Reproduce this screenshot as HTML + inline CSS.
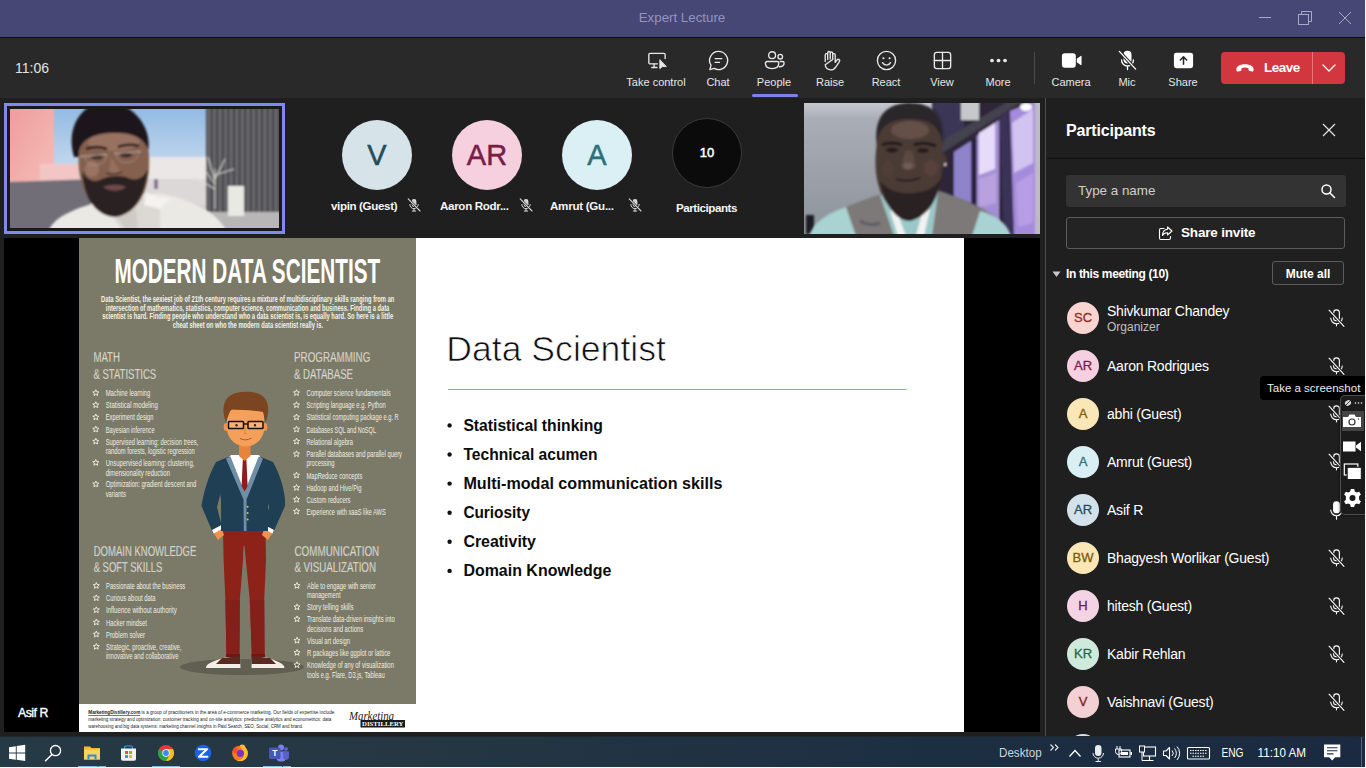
<!DOCTYPE html>
<html lang="en">
<head>
<meta charset="utf-8">
<title>Expert Lecture</title>
<style>
*{box-sizing:border-box;margin:0;padding:0}
html,body{width:1366px;height:768px;overflow:hidden;background:#1f1f1f;font-family:"Liberation Sans",sans-serif;color:#fff}
#app{position:relative;width:1366px;height:768px;overflow:hidden;background:#1f1f1f}
.abs{position:absolute}
/* title bar */
#titlebar{position:absolute;left:0;top:0;width:1366px;height:38px;background:#464775;border-bottom:1px solid #0c0c16;z-index:2}
#titlebar .t{position:absolute;left:0;width:1364px;top:10px;text-align:center;font-size:13.3px;color:#9494c0}
/* toolbar */
#toolbar{position:absolute;left:0;top:37px;width:1366px;height:61px;background:#292929}
#time{position:absolute;left:15px;top:23px;font-size:14px;color:#e3e3e3}
.tb{position:absolute;top:0;height:61px;width:70px;text-align:center}
.tb .lb{position:absolute;left:-20px;right:-20px;top:39px;font-size:11px;color:#e6e6e6;text-align:center;white-space:nowrap}
.tb svg{position:absolute;left:50%;top:11.7px;margin-left:-11.5px;width:23px;height:23px}
#leave{position:absolute;left:1221px;top:15px;width:124px;height:32px;background:#d2363f;border-radius:4px}
#leave .dv{position:absolute;left:91px;top:0;width:1px;height:32px;background:#e8747a}
#leave .tx{position:absolute;left:43px;top:8px;font-size:13.5px;font-weight:bold;color:#fff;letter-spacing:-0.5px}
/* stage */
#stage{position:absolute;left:0;top:98px;width:1046px;height:638px;background:#1f1f1f}
.av{position:absolute;width:70px;height:70px;border-radius:50%;text-align:center;line-height:70px;font-size:29px;-webkit-text-stroke:0.5px currentColor}
.avl{position:absolute;font-size:11.6px;color:#f4f4f4;white-space:nowrap;font-weight:bold;line-height:14px}
/* panel */
#panel{position:absolute;left:1047px;top:98px;width:319px;height:638px;background:#1f1f1f}
#pborder{position:absolute;left:1045px;top:98px;width:1px;height:638px;background:#4d4d4d}
.row{position:absolute;left:0;width:320px;height:48px}
.row .pa{position:absolute;left:20px;top:8px;width:32px;height:32px;border-radius:50%;font-size:13px;line-height:32px;text-align:center;-webkit-text-stroke:0.3px currentColor}
.row .nm{position:absolute;left:60px;top:16px;font-size:14px;color:#fff;white-space:nowrap;letter-spacing:-0.22px}
.row svg{position:absolute;left:277.5px;top:12.9px;width:23px;height:23px}
/* taskbar */
#taskbar{position:absolute;left:0;top:736px;width:1366px;height:32px;background:linear-gradient(90deg,#263a45 0%,#243743 30%,#1c2e42 70%,#1b2a41 100%);border-bottom:1px solid #f4f4f4;border-top:1px solid #20272d}
</style>
</head>
<body>
<div id="app">
<div id="titlebar"><div class="t">Expert Lecture</div><svg class="abs" style="left:1251px;top:6px" width="110" height="26" viewBox="0 0 110 26" fill="none" stroke="#a9a9c9" stroke-width="1">
<path d="M8 11.5H20"/>
<rect x="47.5" y="8.5" width="10" height="10"/><path d="M50.5 8.5V5.5H60.5V15.5H57.5"/>
<path d="M88 6L100 18M100 6L88 18"/>
</svg></div>
<div id="toolbar"><div id="time">11:06</div>
<div class="tb" style="left:621px"><svg viewBox="0 0 24 24" fill="none" stroke="#e8e8e8" stroke-width="1.4" stroke-linecap="round" stroke-linejoin="round"><path d="M13 15.5H5.2A1.2 1.2 0 0 1 4 14.3V5.700000000000001A1.2 1.2 0 0 1 5.2 4.5H19.8A1.2 1.2 0 0 1 21 5.7V10"/><path d="M9.500000000000002 15.5V19M7 19.3H12.500000000000002"/><path d="M15.5 11.5V20.5L18 18.300000000000002H21.8Z" fill="#e8e8e8" stroke-width="1"/></svg><div class="lb">Take control</div></div>
<div class="tb" style="left:683px"><svg viewBox="0 0 24 24" fill="none" stroke="#e8e8e8" stroke-width="1.4" stroke-linecap="round" stroke-linejoin="round"><path d="M12 2.5a9.5 9.5 0 1 1-4.600000000000001 17.8L3 21.5l1.2-4.4A9.5 9.5 0 0 1 12 2.5Z"/><path d="M8.5 10H15.5M8.5 14H13"/></svg><div class="lb">Chat</div></div>
<div class="tb" style="left:739px"><svg viewBox="0 0 24 24" fill="none" stroke="#e8e8e8" stroke-width="1.4" stroke-linecap="round" stroke-linejoin="round"><circle cx="9.5" cy="6.500000000000001" r="3.6"/><circle cx="18" cy="8" r="2.4"/><path d="M4.2 13H14.8A1.7 1.7 0 0 1 16.5 14.7C16.5 18 14 20.5 9.500000000000002 20.5S2.5 18 2.5 14.7A1.7 1.7 0 0 1 4.2 13Z"/><path d="M17 18.500000000000004C20.000000000000004 18.500000000000004 22 16.8 22 14.6A1.6 1.6 0 0 0 20.400000000000002 13H18.000000000000004"/></svg><div class="lb">People</div><div class="abs" style="left:13px;top:57px;width:46px;height:3px;border-radius:2px;background:#7b83eb"></div></div>
<div class="tb" style="left:795px"><svg viewBox="0 0 24 24" fill="none" stroke="#e8e8e8" stroke-width="1.4" stroke-linecap="round" stroke-linejoin="round"><path d="M6.5 13V6.2a1.3 1.3 0 0 1 2.6 0V11M9.1 10.5V3.9a1.3 1.3 0 0 1 2.6 0V10.500000000000002M11.700000000000001 10.5V4.4a1.3 1.3 0 0 1 2.6 0V11M14.3 11V6.2a1.3 1.3 0 0 1 2.6 0V14l2-2.600000000000001a1.5 1.5 0 0 1 2.4 1.8000000000000003l-3.7 5.4C16.4 20.6 14.600000000000001 21.8 12 21.8S6.5 19.900000000000002 6.500000000000001 16.5Z"/></svg><div class="lb">Raise</div></div>
<div class="tb" style="left:851px"><svg viewBox="0 0 24 24" fill="none" stroke="#e8e8e8" stroke-width="1.4" stroke-linecap="round" stroke-linejoin="round"><circle cx="12" cy="12" r="9.5"/><path d="M7.8 14.2c1 1.7 2.4 2.6 4.2 2.6s3.2-0.9 4.2-2.6"/><circle cx="8.8" cy="9.600000000000001" r="1.1" fill="#e8e8e8" stroke="none"/><circle cx="15.2" cy="9.600000000000001" r="1.1" fill="#e8e8e8" stroke="none"/></svg><div class="lb">React</div></div>
<div class="tb" style="left:907px"><svg viewBox="0 0 24 24" fill="none" stroke="#e8e8e8" stroke-width="1.4" stroke-linecap="round" stroke-linejoin="round"><rect x="3.5" y="3.5" width="17" height="17" rx="2.5"/><path d="M12 3.5V20.5M3.5 12H20.5"/></svg><div class="lb">View</div></div>
<div class="tb" style="left:963px"><svg viewBox="0 0 24 24" fill="#e8e8e8"><circle cx="5.2" cy="12" r="1.95"/><circle cx="12" cy="12" r="1.95"/><circle cx="18.8" cy="12" r="1.95"/></svg><div class="lb">More</div></div>
<div class="abs" style="left:1034px;top:15px;width:1px;height:32px;background:#4a4a4a"></div>
<div class="tb" style="left:1036px"><svg viewBox="0 0 24 24" fill="#ffffff"><rect x="2" y="4.5" width="14.5" height="15" rx="3"/><path d="M17.5 10.2L21.6 7.2A0.6 0.6 0 0 1 22.5 7.7V16.3A0.6 0.6 0 0 1 21.6 16.8L17.500000000000004 13.8Z"/></svg><div class="lb">Camera</div></div>
<div class="tb" style="left:1092px"><svg viewBox="0 0 24 24" fill="none" stroke="#ffffff" stroke-width="1.4" stroke-linecap="round"><rect x="8.5" y="2.5" width="7" height="12" rx="3.5" fill="#ffffff"/><path d="M5.800000000000001 11.5a6.2 6.2 0 0 0 12.4 0M12 17.8V21.5"/><path d="M3.5 2.5L20.5 21" stroke="#292929" stroke-width="3.4"/><path d="M3.5 2.5L20.5 21"/></svg><div class="lb">Mic</div></div>
<div class="tb" style="left:1148px"><svg viewBox="0 0 24 24"><rect x="2" y="4" width="20" height="16" rx="2.600000000000001" fill="#ffffff"/><path d="M12 16V8.500000000000002M8.700000000000001 11.5L12 8.2L15.3 11.5" fill="none" stroke="#292929" stroke-width="1.6" stroke-linecap="round" stroke-linejoin="round"/></svg><div class="lb">Share</div></div>
<div id="leave"><svg class="abs" style="left:14px;top:8px" width="20" height="16" viewBox="0 0 20 16"><path d="M1.4 9.600000000000001C1 6.5 5 4.3 10 4.3S19 6.5 18.6 9.6L18.400000000000002 10.7A1 1 0 0 1 17.200000000000003 11.5L14.4 10.9A1 1 0 0 1 13.6 10L13.4 8.3A9 9 0 0 0 6.6000000000000005 8.3L6.4 10A1 1 0 0 1 5.6000000000000005 10.9L2.8 11.5A1 1 0 0 1 1.6 10.7Z" fill="#fff"/></svg><div class="tx">Leave</div><div class="dv"></div><svg class="abs" style="left:100px;top:10px" width="16" height="12" viewBox="0 0 16 12" fill="none" stroke="#fff" stroke-width="1.3" stroke-linecap="round" stroke-linejoin="round"><path d="M2 3L8 9L14 3"/></svg></div>
</div>
<div id="stage">
<div class="abs" style="left:4px;top:5px;width:281px;height:131px;border:3px solid #8189ee;background:#1a1a1a"></div>
<svg class="abs" style="left:10px;top:11px" width="269" height="119" viewBox="0 0 269 119">
<defs>
<linearGradient id="v1sky" x1="0" y1="0" x2="0" y2="1"><stop offset="0" stop-color="#93bbe4"/><stop offset="0.55" stop-color="#c9dcee"/><stop offset="1" stop-color="#efeaea"/></linearGradient>
<linearGradient id="v1pink" x1="0" y1="0" x2="1" y2="1"><stop offset="0" stop-color="#ee9c9c"/><stop offset="1" stop-color="#f6bdb8"/></linearGradient>
<linearGradient id="v1cur" x1="0" y1="0" x2="1" y2="0"><stop offset="0" stop-color="#3e3e42"/><stop offset="0.5" stop-color="#77777b"/><stop offset="1" stop-color="#3e3e42"/></linearGradient>
<pattern id="v1st" width="5.6" height="10" patternUnits="userSpaceOnUse"><rect width="5.600" height="10" fill="url(#v1cur)"/></pattern>
<filter id="v1b" x="-5%" y="-5%" width="110%" height="110%"><feGaussianBlur stdDeviation="0.9"/></filter>
<filter id="v1b2" x="-10%" y="-10%" width="120%" height="120%"><feGaussianBlur stdDeviation="2.2"/></filter>
<clipPath id="v1c"><rect width="269" height="119"/></clipPath>
</defs>
<g clip-path="url(#v1c)">
<rect width="269" height="119" fill="url(#v1sky)"/>
<g filter="url(#v1b)">
<rect x="120" y="48" width="80" height="50" fill="#ece7e7"/>
<rect x="120" y="70" width="80" height="28" fill="#dcd8d8"/>
<rect x="0" y="96" width="269" height="23" fill="#d5d1d2"/>
<rect x="-2" y="-2" width="46" height="76" fill="url(#v1pink)"/>
<rect x="30" y="55" width="40" height="18" fill="#f3c6c6"/>
<path d="M-2 73L83 70V121H-2Z" fill="#716e77"/>
<rect x="196" y="-2" width="75" height="105" fill="url(#v1st)"/>
<rect x="196" y="103" width="75" height="18" fill="#b9b6b8"/>
<rect x="218" y="77" width="16" height="30" fill="#e9e9e4"/>
<path d="M205 100V60M205 75L190 55M205 70L215 50M205 80L184 68M205 66L224 60M205 72L198 48" stroke="#e4e0da" stroke-width="1.100" fill="none" opacity="0.85"/>
<rect x="144" y="70" width="4" height="10" fill="#8a6f8f"/>
</g>
<g filter="url(#v1b)">
<path d="M39 121C45 106 70 98 92 92L150 84C175 90 205 100 216 121Z" fill="#ebe9e4"/>
<path d="M92 92L112 121H150L150 86Z" fill="#dcd9d3"/>
<path d="M136 84L160 90L150 100L134 96Z" fill="#f4f3ef"/>
<path d="M104 104L116 121H128L126 100Z" fill="#cfcbc4"/>
<path d="M64 48C57 24 66 6 80 -3L114 -3C132 6 143 26 137 48Z" fill="#1b191b"/>
<path d="M69 42C66 70 76 100 105 107C128 105 141 82 139 45C136 28 122 23 102 24C84 25 72 30 69 42Z" fill="#85604f"/>
<ellipse cx="104" cy="33" rx="26" ry="9" fill="#9c7665" opacity="0.8"/>
<ellipse cx="82" cy="60" rx="7" ry="8" fill="#a07868" opacity="0.8"/>
<path d="M76 40Q86 36 97 40" stroke="#241a18" stroke-width="2.600" fill="none"/>
<path d="M108 38Q118 34 129 37" stroke="#241a18" stroke-width="2.600" fill="none"/>
<ellipse cx="87" cy="48" rx="6" ry="2.600" fill="#3a2a26"/><ellipse cx="116" cy="46" rx="6" ry="2.600" fill="#3a2a26"/>
<path d="M101 48L99 62Q104 66 110 62Z" fill="#96705f"/>
<path d="M96 64Q104 67 112 63" stroke="#4a342e" stroke-width="1.600" fill="none"/>
<path d="M72 62C74 92 88 108 106 108C124 105 135 88 138 60C132 72 124 72 116 68C108 66 98 67 92 70C84 74 78 72 72 62Z" fill="#2a2124"/>
<path d="M93 78C100 75 110 75 116 78C110 83 100 83 93 78Z" fill="#70494a"/>
<path d="M70 47.500L97 45.500M104 44.700L131 42.500" stroke="#cfc7c0" stroke-width="0.9" opacity="0.85"/>
<path d="M75 47.500Q76 56 86 56Q96 55 97 46M106 45Q107 54 117 53.500Q127 53 129 43" stroke="#b8aea8" stroke-width="0.700" fill="none" opacity="0.7"/>
</g>
</g>
</g>
</svg>
<svg class="abs" style="left:804px;top:5px" width="236" height="131" viewBox="0 0 236 131">
<defs>
<linearGradient id="v2w" x1="0" y1="0" x2="0" y2="1"><stop offset="0" stop-color="#c6c9cf"/><stop offset="0.12" stop-color="#a9adb5"/><stop offset="1" stop-color="#8e949c"/></linearGradient>
<linearGradient id="v2win" x1="0" y1="0" x2="1" y2="1"><stop offset="0" stop-color="#8f7fc8"/><stop offset="0.5" stop-color="#c9b4ee"/><stop offset="1" stop-color="#a88fd8"/></linearGradient>
<filter id="v2b" x="-5%" y="-5%" width="110%" height="110%"><feGaussianBlur stdDeviation="1.100"/></filter>
<clipPath id="v2c"><rect width="236" height="131"/></clipPath>
</defs>
<g clip-path="url(#v2c)">
<rect width="236" height="131" fill="url(#v2w)"/>
<g filter="url(#v2b)">
<rect x="128" y="-2" width="112" height="135" fill="#2d2838"/>
<path d="M128 -2H160V30L128 50Z" fill="#3a3556"/>
<path d="M150 49L167 38V100H150Z" fill="#8f84cc"/>
<path d="M172.600 33L195 17V131H172.600Z" fill="#a48fd6"/>
<path d="M175 30L191 20V66L175 72Z" fill="#e6dcfa"/>
<path d="M175 76L192 70V100L175 104Z" fill="#b9a0de"/>
<path d="M206 8L231 -2V133H210Z" fill="#a58bdc"/>
<path d="M208 20L229 6V60L210 70Z" fill="#d9ccf5" opacity="0.85"/>
<path d="M212 80L229 70V120L214 124Z" fill="#b99ee6" opacity="0.9"/>
<path d="M167 36H172.600V100H167Z" fill="#2a2440"/>
<path d="M195 14L204 8L210 133H200Z" fill="#3a3058"/>
<rect x="231" y="-2" width="8" height="135" fill="#bdb9c6"/>
<path d="M134 40L208 -4L222 -4L138 50Z" fill="#45424f"/>
<rect x="157" y="-2" width="18" height="19" fill="#c6c9cc"/>
<ellipse cx="222" cy="4" rx="6" ry="4" fill="#fff"/>
<rect x="2" y="112" width="8" height="19" fill="#1e1c20"/>
</g>
<g filter="url(#v2b)">
<path d="M5 133C15 112 50 100 80 90L130 86C160 96 195 108 207 133Z" fill="#7b7978"/>
<path d="M5 133C10 118 25 110 42 104L52 133Z" fill="#a9d2d2"/>
<path d="M207 133C202 118 190 112 176 108L168 133Z" fill="#a9d2d2"/>
<path d="M76 92L90 133H128L134 90Z" fill="#9cc7c8"/>
<path d="M86 108L94 133H102L92 106Z M118 110L112 133H120L126 106Z" fill="#f2f2f2"/>
<path d="M56 118Q66 124 76 120" stroke="#5f5e66" stroke-width="3" fill="none"/>
<path d="M73 44C68 10 86 0 106 0C128 0 143 12 138 44Z" fill="#2c282a"/>
<path d="M73 40C68 70 74 106 104 116C132 110 142 76 138 40C136 22 124 16 105 16C86 16 75 24 73 40Z" fill="#4b3a36"/>
<ellipse cx="140" cy="58" rx="3" ry="7" fill="#4a3834"/><circle cx="141.500" cy="61.500" r="1.500" fill="#d8d4d0"/>
<ellipse cx="106" cy="27" rx="19" ry="9" fill="#6a554e" opacity="0.85"/>
<ellipse cx="127" cy="65" rx="7" ry="8" fill="#6a4846" opacity="0.45"/>
<ellipse cx="84" cy="66" rx="6" ry="8" fill="#5b443f" opacity="0.4"/>
<path d="M78 42Q88 38 98 42M110 42Q120 38 132 43" stroke="#1f1a1a" stroke-width="3" fill="none"/>
<ellipse cx="88" cy="47" rx="6" ry="2.500" fill="#241c1c"/><ellipse cx="119" cy="47.500" rx="6" ry="2.500" fill="#241c1c"/>
<path d="M101 48L97 64Q104 70 112 64L108 48Z" fill="#5c4842"/>
<ellipse cx="104" cy="63" rx="5" ry="3.500" fill="#77605a" opacity="0.8"/>
<path d="M92 76Q104 80 116 75" stroke="#2a1f1f" stroke-width="2" fill="none"/>
<path d="M76 78C82 106 94 118 106 118C122 114 133 100 137 76C128 88 116 90 104 90C94 90 84 88 76 78Z" fill="#2b2223"/>
</g>
</g>
</g>
</svg>
<div class="av" style="left:342px;top:22px;background:#d6e4ea;color:#1f4e5c;font-size:29px">V</div>
<div class="av" style="left:452px;top:22px;background:#f6d0df;color:#7a1d48;font-size:29px">AR</div>
<div class="av" style="left:562px;top:22px;background:#daf0f4;color:#2d7077;font-size:29px">A</div>
<div class="av" style="left:672px;top:20px;background:#0b0b0b;color:#fff;font-size:13px;border:1px solid #3a3a3a;line-height:68px">10</div>
<div class="avl" style="left:331px;top:101px;letter-spacing:-0.36px">vipin (Guest)</div>
<div class="avl" style="left:440px;top:101px;letter-spacing:-0.32px">Aaron Rodr...</div>
<div class="avl" style="left:550px;top:101px;letter-spacing:-0.27px">Amrut (Gu...</div>
<div class="avl" style="left:676px;top:103px;letter-spacing:-0.45px">Participants</div>
<svg class="abs" style="left:406px;top:98.6px" width="16" height="16" viewBox="0 0 16 16" fill="none" stroke="#d6d6d6" stroke-width="1" stroke-linecap="round"><rect x="5.600" y="2" width="4.800" height="8" rx="2.400" fill="#d6d6d6" stroke="none"/><path d="M3.800 7.500a4.200 4.200 0 0 0 8.400 0M8 11.700V14M6.300 14H9.700"/><path d="M2.200 1.800L14 14" stroke="#1f1f1f" stroke-width="2.400"/><path d="M2.200 1.800L14 14" stroke-width="1.100"/></svg><svg class="abs" style="left:517.5px;top:98.6px" width="16" height="16" viewBox="0 0 16 16" fill="none" stroke="#d6d6d6" stroke-width="1" stroke-linecap="round"><rect x="5.600" y="2" width="4.800" height="8" rx="2.400" fill="#d6d6d6" stroke="none"/><path d="M3.800 7.500a4.200 4.200 0 0 0 8.400 0M8 11.700V14M6.300 14H9.700"/><path d="M2.200 1.800L14 14" stroke="#1f1f1f" stroke-width="2.400"/><path d="M2.200 1.800L14 14" stroke-width="1.100"/></svg><svg class="abs" style="left:627px;top:98.6px" width="16" height="16" viewBox="0 0 16 16" fill="none" stroke="#d6d6d6" stroke-width="1" stroke-linecap="round"><rect x="5.600" y="2" width="4.800" height="8" rx="2.400" fill="#d6d6d6" stroke="none"/><path d="M3.800 7.500a4.200 4.200 0 0 0 8.400 0M8 11.700V14M6.300 14H9.700"/><path d="M2.200 1.800L14 14" stroke="#1f1f1f" stroke-width="2.400"/><path d="M2.200 1.800L14 14" stroke-width="1.100"/></svg><svg class="abs" style="left:4px;top:140px" width="1036" height="494" viewBox="0 0 1036 494" font-family="Liberation Sans, sans-serif">
<defs><radialGradient id="og" cx="0.5" cy="0.55" r="0.75"><stop offset="0" stop-color="#83826f"/><stop offset="1" stop-color="#77766a"/></radialGradient></defs>
<rect x="0" y="0" width="1036" height="494" fill="#000"/>
<rect x="75" y="0" width="337" height="466" fill="#7b7a68"/>
<rect x="75" y="466" width="337" height="28" fill="#fff"/>
<rect x="412" y="0" width="548" height="494" fill="#fff"/>
<g transform="translate(-4,-238)">
<ellipse cx="242" cy="667" rx="62" ry="8" fill="#605f51"/>
<path d="M223 530 L265.5 530 L266 560 L264.2 600 L264.6 659 L252 659 L249.8 600 L245.8 560 L244.5 546 L243.5 546 L243 560 L239.8 600 L239.4 659 L226.5 659 L225.4 600 L223.6 560 Z" fill="#8d2219"/>
<path d="M225.4 600 L239.8 600 L239.4 659 L226.5 659 Z M249.8 600 L264.2 600 L264.6 659 L252 659 Z" fill="#84201a"/>
<path d="M226 654 L240 654 L240 659.5 L226 659.5 Z M251.5 654 L265 654 L265 659.5 L251.5 659.5Z" fill="#6f1711"/>
<path d="M206 668 C206 663 214 661 226 657 L240 657 L240.5 668 Z" fill="#f4efe6"/>
<path d="M222 658 L240 656 L240.3 664 L216 664 Z" fill="#5a2a22"/>
<path d="M284.5 668 C284.5 663 276 661 266 657 L252 657 L251.5 668 Z" fill="#f4efe6"/>
<path d="M270 658 L252 656 L251.7 664 L276 664 Z" fill="#5a2a22"/>
<path d="M216 462 C208 476 203 495 201.5 506 L213 533 L222 527 L217 507 L224 480 Z" fill="#1f3f55"/>
<path d="M273 462 C281 476 286 495 285 506 L273 533 L264 527 L269 507 L262 480 Z" fill="#1f3f55"/>
<path d="M213 532 L221 527 L224 535 L218 540 Z" fill="#f0944d"/>
<path d="M273 532 L265 527 L262 535 L268 540 Z" fill="#f0944d"/>
<path d="M212 530 L221.5 525 L223 528.5 L213.500 533.5 Z" fill="#fff"/>
<path d="M274 530 L264.5 525 L263 528.5 L272.5 533.5 Z" fill="#fff"/>
<path d="M216 462 L228 457 L261 457 L273 462 L268 500 L268 531 L221 531 L221 500 Z" fill="#1f3f55"/>
<path d="M231 455 L259 455 L262 460 L244.6 498 L227 460 Z" fill="#fff"/>
<path d="M226 458.5 L230.500 456.5 L244.6 492 L258.7 456.5 L263 458.5 L246.5 499.5 L246.5 531 L243.8 531 L243.500 499.5 Z" fill="#6f8fa8"/>
<path d="M242.8 459.5 L246.4 459.5 L247.6 486 L244.6 492 L241.6 486 Z" fill="#8f1d1d"/>
<circle cx="247.6" cy="506.7" r="1" fill="#d8c04a"/>
<circle cx="247.6" cy="513" r="1" fill="#d8c04a"/>
<circle cx="247.6" cy="519.5" r="1" fill="#d8c04a"/>
<path d="M239 440 L250.500 440 L250.500 456 L244.6 461 L239 456 Z" fill="#e8833c"/>
<ellipse cx="226.3" cy="427" rx="2.6" ry="4" fill="#f0944d"/><ellipse cx="264.8" cy="427" rx="2.600" ry="4" fill="#f0944d"/>
<path d="M227 410 L264 410 L264 430 C263 440 254 446.5 245.5 446.5 C237 446.5 228 440 227 430 Z" fill="#f5a05a"/>
<path d="M226 422 C221 410 223 396 236 393 C248 390 262 392 266 400 C270 408 268 416 265.500 422 L263 412 C252 410 240 410 232 409 C229 412 228 417 226 422 Z" fill="#7a4520"/>
<rect x="228.5" y="421.5" width="15" height="7" rx="0.8" fill="#f6b27a" stroke="#111" stroke-width="1.5"/><rect x="248" y="421.5" width="15" height="7" rx="0.8" fill="#f6b27a" stroke="#111" stroke-width="1.5"/><path d="M243.500 424H248" stroke="#111" stroke-width="1.4"/>
<circle cx="236.5" cy="425.2" r="1.2" fill="#3a2414"/><circle cx="255" cy="425.2" r="1.2" fill="#3a2414"/>
<path d="M240 438.5 Q245.5 441.500 251.5 438" fill="none" stroke="#a3501f" stroke-width="0.9"/><path d="M245.500 428 L244.4 433.500 L247 433.8" fill="none" stroke="#d67a35" stroke-width="0.8"/>
</g>
<text x="110.4" y="45.0" font-size="34.3" fill="#fff" font-weight="bold" text-anchor="start" textLength="265.8" lengthAdjust="spacingAndGlyphs">MODERN DATA SCIENTIST</text>
<text x="97.0" y="64.0" font-size="8.2" fill="#f4f3ea" font-weight="bold" text-anchor="start" textLength="293.4" lengthAdjust="spacingAndGlyphs">Data Scientist, the sexiest job of 21th century requires a mixture of multidisciplinary skills ranging from an</text>
<text x="101.8" y="72.5" font-size="8.2" fill="#f4f3ea" font-weight="bold" text-anchor="start" textLength="283.5" lengthAdjust="spacingAndGlyphs">intersection of mathematics, statistics, computer science, communication and business. Finding a data</text>
<text x="98.2" y="81.0" font-size="8.2" fill="#f4f3ea" font-weight="bold" text-anchor="start" textLength="291.0" lengthAdjust="spacingAndGlyphs">scientist is hard.  Finding people who understand who a data scientist is, is equally hard. So here is a little</text>
<text x="168.8" y="89.6" font-size="8.2" fill="#f4f3ea" font-weight="bold" text-anchor="start" textLength="150.2" lengthAdjust="spacingAndGlyphs">cheat sheet on who the modern data scientist really is.</text>
<text x="89.4" y="124.4" font-size="15.2" fill="#f6f5ee" font-weight="normal" text-anchor="start" textLength="26.5" lengthAdjust="spacingAndGlyphs" stroke="#7b7a68" stroke-width="0.3">MATH</text>
<text x="89.4" y="140.6" font-size="15.2" fill="#f6f5ee" font-weight="normal" text-anchor="start" textLength="62.8" lengthAdjust="spacingAndGlyphs" stroke="#7b7a68" stroke-width="0.3">&amp; STATISTICS</text>
<text x="290.0" y="124.4" font-size="15.2" fill="#f6f5ee" font-weight="normal" text-anchor="start" textLength="76.3" lengthAdjust="spacingAndGlyphs" stroke="#7b7a68" stroke-width="0.3">PROGRAMMING</text>
<text x="290.0" y="140.6" font-size="15.2" fill="#f6f5ee" font-weight="normal" text-anchor="start" textLength="59.0" lengthAdjust="spacingAndGlyphs" stroke="#7b7a68" stroke-width="0.3">&amp; DATABASE</text>
<text x="89.7" y="318.2" font-size="15.2" fill="#f6f5ee" font-weight="normal" text-anchor="start" textLength="102.7" lengthAdjust="spacingAndGlyphs" stroke="#7b7a68" stroke-width="0.3">DOMAIN KNOWLEDGE</text>
<text x="89.7" y="334.0" font-size="15.2" fill="#f6f5ee" font-weight="normal" text-anchor="start" textLength="68.6" lengthAdjust="spacingAndGlyphs" stroke="#7b7a68" stroke-width="0.3">&amp; SOFT SKILLS</text>
<text x="290.4" y="318.2" font-size="15.2" fill="#f6f5ee" font-weight="normal" text-anchor="start" textLength="84.8" lengthAdjust="spacingAndGlyphs" stroke="#7b7a68" stroke-width="0.3">COMMUNICATION</text>
<text x="290.4" y="334.0" font-size="15.2" fill="#f6f5ee" font-weight="normal" text-anchor="start" textLength="81.6" lengthAdjust="spacingAndGlyphs" stroke="#7b7a68" stroke-width="0.3">&amp; VISUALIZATION</text>
<polygon points="91.80,151.70 92.65,153.74 94.84,153.91 93.17,155.34 93.68,157.49 91.80,156.34 89.92,157.49 90.43,155.34 88.76,153.91 90.95,153.74" fill="none" stroke="#f1f0e6" stroke-width="0.9" stroke-linejoin="round"/>
<text x="101.7" y="158.1" font-size="8.6" fill="#efeee2" font-weight="normal" text-anchor="start" textLength="44.6" lengthAdjust="spacingAndGlyphs">Machine learning</text>
<polygon points="91.80,163.80 92.65,165.84 94.84,166.01 93.17,167.44 93.68,169.59 91.80,168.44 89.92,169.59 90.43,167.44 88.76,166.01 90.95,165.84" fill="none" stroke="#f1f0e6" stroke-width="0.9" stroke-linejoin="round"/>
<text x="101.7" y="170.2" font-size="8.6" fill="#efeee2" font-weight="normal" text-anchor="start" textLength="52.1" lengthAdjust="spacingAndGlyphs">Statistical modeling</text>
<polygon points="91.80,176.00 92.65,178.04 94.84,178.21 93.17,179.64 93.68,181.79 91.80,180.64 89.92,181.79 90.43,179.64 88.76,178.21 90.95,178.04" fill="none" stroke="#f1f0e6" stroke-width="0.9" stroke-linejoin="round"/>
<text x="101.7" y="182.4" font-size="8.6" fill="#efeee2" font-weight="normal" text-anchor="start" textLength="47.8" lengthAdjust="spacingAndGlyphs">Experiment design</text>
<polygon points="91.80,188.10 92.65,190.14 94.84,190.31 93.17,191.74 93.68,193.89 91.80,192.74 89.92,193.89 90.43,191.74 88.76,190.31 90.95,190.14" fill="none" stroke="#f1f0e6" stroke-width="0.9" stroke-linejoin="round"/>
<text x="101.7" y="194.5" font-size="8.6" fill="#efeee2" font-weight="normal" text-anchor="start" textLength="49.0" lengthAdjust="spacingAndGlyphs">Bayesian inference</text>
<polygon points="91.80,200.20 92.65,202.24 94.84,202.41 93.17,203.84 93.68,205.99 91.80,204.84 89.92,205.99 90.43,203.84 88.76,202.41 90.95,202.24" fill="none" stroke="#f1f0e6" stroke-width="0.9" stroke-linejoin="round"/>
<text x="101.7" y="206.6" font-size="8.6" fill="#efeee2" font-weight="normal" text-anchor="start" textLength="92.6" lengthAdjust="spacingAndGlyphs">Supervised learning: decision trees,</text>
<text x="101.7" y="216.0" font-size="8.6" fill="#efeee2" font-weight="normal" text-anchor="start" textLength="89.1" lengthAdjust="spacingAndGlyphs">random forests, logistic regression</text>
<polygon points="91.80,221.50 92.65,223.54 94.84,223.71 93.17,225.14 93.68,227.29 91.80,226.14 89.92,227.29 90.43,225.14 88.76,223.71 90.95,223.54" fill="none" stroke="#f1f0e6" stroke-width="0.9" stroke-linejoin="round"/>
<text x="101.7" y="227.9" font-size="8.6" fill="#efeee2" font-weight="normal" text-anchor="start" textLength="88.6" lengthAdjust="spacingAndGlyphs">Unsupervised learning: clustering,</text>
<text x="101.7" y="237.5" font-size="8.6" fill="#efeee2" font-weight="normal" text-anchor="start" textLength="64.3" lengthAdjust="spacingAndGlyphs">dimensionality reduction</text>
<polygon points="91.80,243.00 92.65,245.04 94.84,245.21 93.17,246.64 93.68,248.79 91.80,247.64 89.92,248.79 90.43,246.64 88.76,245.21 90.95,245.04" fill="none" stroke="#f1f0e6" stroke-width="0.9" stroke-linejoin="round"/>
<text x="101.7" y="249.4" font-size="8.6" fill="#efeee2" font-weight="normal" text-anchor="start" textLength="90.6" lengthAdjust="spacingAndGlyphs">Optimization: gradient descent and</text>
<text x="101.7" y="258.8" font-size="8.6" fill="#efeee2" font-weight="normal" text-anchor="start" textLength="20.1" lengthAdjust="spacingAndGlyphs">variants</text>
<polygon points="292.50,151.70 293.35,153.74 295.54,153.91 293.87,155.34 294.38,157.49 292.50,156.34 290.62,157.49 291.13,155.34 289.46,153.91 291.65,153.74" fill="none" stroke="#f1f0e6" stroke-width="0.9" stroke-linejoin="round"/>
<text x="302.4" y="158.1" font-size="8.6" fill="#efeee2" font-weight="normal" text-anchor="start" textLength="84.4" lengthAdjust="spacingAndGlyphs">Computer science fundamentals</text>
<polygon points="292.50,163.80 293.35,165.84 295.54,166.01 293.87,167.44 294.38,169.59 292.50,168.44 290.62,169.59 291.13,167.44 289.46,166.01 291.65,165.84" fill="none" stroke="#f1f0e6" stroke-width="0.9" stroke-linejoin="round"/>
<text x="302.4" y="170.2" font-size="8.6" fill="#efeee2" font-weight="normal" text-anchor="start" textLength="79.4" lengthAdjust="spacingAndGlyphs">Scripting language e.g. Python</text>
<polygon points="292.50,176.00 293.35,178.04 295.54,178.21 293.87,179.64 294.38,181.79 292.50,180.64 290.62,181.79 291.13,179.64 289.46,178.21 291.65,178.04" fill="none" stroke="#f1f0e6" stroke-width="0.9" stroke-linejoin="round"/>
<text x="302.4" y="182.4" font-size="8.6" fill="#efeee2" font-weight="normal" text-anchor="start" textLength="92.3" lengthAdjust="spacingAndGlyphs">Statistical computing package e.g. R</text>
<polygon points="292.50,188.10 293.35,190.14 295.54,190.31 293.87,191.74 294.38,193.89 292.50,192.74 290.62,193.89 291.13,191.74 289.46,190.31 291.65,190.14" fill="none" stroke="#f1f0e6" stroke-width="0.9" stroke-linejoin="round"/>
<text x="302.4" y="194.5" font-size="8.6" fill="#efeee2" font-weight="normal" text-anchor="start" textLength="69.6" lengthAdjust="spacingAndGlyphs">Databases SQL and NoSQL</text>
<polygon points="292.50,200.20 293.35,202.24 295.54,202.41 293.87,203.84 294.38,205.99 292.50,204.84 290.62,205.99 291.13,203.84 289.46,202.41 291.65,202.24" fill="none" stroke="#f1f0e6" stroke-width="0.9" stroke-linejoin="round"/>
<text x="302.4" y="206.6" font-size="8.6" fill="#efeee2" font-weight="normal" text-anchor="start" textLength="46.6" lengthAdjust="spacingAndGlyphs">Relational algebra</text>
<polygon points="292.50,212.80 293.35,214.84 295.54,215.01 293.87,216.44 294.38,218.59 292.50,217.44 290.62,218.59 291.13,216.44 289.46,215.01 291.65,214.84" fill="none" stroke="#f1f0e6" stroke-width="0.9" stroke-linejoin="round"/>
<text x="302.4" y="219.2" font-size="8.6" fill="#efeee2" font-weight="normal" text-anchor="start" textLength="95.6" lengthAdjust="spacingAndGlyphs">Parallel databases and parallel query</text>
<text x="302.4" y="228.3" font-size="8.6" fill="#efeee2" font-weight="normal" text-anchor="start" textLength="28.0" lengthAdjust="spacingAndGlyphs">processing</text>
<polygon points="292.50,234.10 293.35,236.14 295.54,236.31 293.87,237.74 294.38,239.89 292.50,238.74 290.62,239.89 291.13,237.74 289.46,236.31 291.65,236.14" fill="none" stroke="#f1f0e6" stroke-width="0.9" stroke-linejoin="round"/>
<text x="302.4" y="240.5" font-size="8.6" fill="#efeee2" font-weight="normal" text-anchor="start" textLength="55.9" lengthAdjust="spacingAndGlyphs">MapReduce concepts</text>
<polygon points="292.50,246.50 293.35,248.54 295.54,248.71 293.87,250.14 294.38,252.29 292.50,251.14 290.62,252.29 291.13,250.14 289.46,248.71 291.65,248.54" fill="none" stroke="#f1f0e6" stroke-width="0.9" stroke-linejoin="round"/>
<text x="302.4" y="252.9" font-size="8.6" fill="#efeee2" font-weight="normal" text-anchor="start" textLength="55.2" lengthAdjust="spacingAndGlyphs">Hadoop and Hive/Pig</text>
<polygon points="292.50,258.40 293.35,260.44 295.54,260.61 293.87,262.04 294.38,264.19 292.50,263.04 290.62,264.19 291.13,262.04 289.46,260.61 291.65,260.44" fill="none" stroke="#f1f0e6" stroke-width="0.9" stroke-linejoin="round"/>
<text x="302.4" y="264.8" font-size="8.6" fill="#efeee2" font-weight="normal" text-anchor="start" textLength="44.1" lengthAdjust="spacingAndGlyphs">Custom reducers</text>
<polygon points="292.50,270.20 293.35,272.24 295.54,272.41 293.87,273.84 294.38,275.99 292.50,274.84 290.62,275.99 291.13,273.84 289.46,272.41 291.65,272.24" fill="none" stroke="#f1f0e6" stroke-width="0.9" stroke-linejoin="round"/>
<text x="302.4" y="276.6" font-size="8.6" fill="#efeee2" font-weight="normal" text-anchor="start" textLength="79.4" lengthAdjust="spacingAndGlyphs">Experience with xaaS like AWS</text>
<polygon points="92.30,344.50 93.15,346.54 95.34,346.71 93.67,348.14 94.18,350.29 92.30,349.14 90.42,350.29 90.93,348.14 89.26,346.71 91.45,346.54" fill="none" stroke="#f1f0e6" stroke-width="0.9" stroke-linejoin="round"/>
<text x="102.0" y="350.9" font-size="8.6" fill="#efeee2" font-weight="normal" text-anchor="start" textLength="79.2" lengthAdjust="spacingAndGlyphs">Passionate about the business</text>
<polygon points="92.30,356.80 93.15,358.84 95.34,359.01 93.67,360.44 94.18,362.59 92.30,361.44 90.42,362.59 90.93,360.44 89.26,359.01 91.45,358.84" fill="none" stroke="#f1f0e6" stroke-width="0.9" stroke-linejoin="round"/>
<text x="102.0" y="363.2" font-size="8.6" fill="#efeee2" font-weight="normal" text-anchor="start" textLength="49.6" lengthAdjust="spacingAndGlyphs">Curious about data</text>
<polygon points="92.30,368.80 93.15,370.84 95.34,371.01 93.67,372.44 94.18,374.59 92.30,373.44 90.42,374.59 90.93,372.44 89.26,371.01 91.45,370.84" fill="none" stroke="#f1f0e6" stroke-width="0.9" stroke-linejoin="round"/>
<text x="102.0" y="375.2" font-size="8.6" fill="#efeee2" font-weight="normal" text-anchor="start" textLength="70.7" lengthAdjust="spacingAndGlyphs">Influence without authority</text>
<polygon points="92.30,381.10 93.15,383.14 95.34,383.31 93.67,384.74 94.18,386.89 92.30,385.74 90.42,386.89 90.93,384.74 89.26,383.31 91.45,383.14" fill="none" stroke="#f1f0e6" stroke-width="0.9" stroke-linejoin="round"/>
<text x="102.0" y="387.5" font-size="8.6" fill="#efeee2" font-weight="normal" text-anchor="start" textLength="41.0" lengthAdjust="spacingAndGlyphs">Hacker mindset</text>
<polygon points="92.30,393.10 93.15,395.14 95.34,395.31 93.67,396.74 94.18,398.89 92.30,397.74 90.42,398.89 90.93,396.74 89.26,395.31 91.45,395.14" fill="none" stroke="#f1f0e6" stroke-width="0.9" stroke-linejoin="round"/>
<text x="102.0" y="399.5" font-size="8.6" fill="#efeee2" font-weight="normal" text-anchor="start" textLength="39.0" lengthAdjust="spacingAndGlyphs">Problem solver</text>
<polygon points="92.30,405.40 93.15,407.44 95.34,407.61 93.67,409.04 94.18,411.19 92.30,410.04 90.42,411.19 90.93,409.04 89.26,407.61 91.45,407.44" fill="none" stroke="#f1f0e6" stroke-width="0.9" stroke-linejoin="round"/>
<text x="102.0" y="411.8" font-size="8.6" fill="#efeee2" font-weight="normal" text-anchor="start" textLength="75.5" lengthAdjust="spacingAndGlyphs">Strategic, proactive, creative,</text>
<text x="102.0" y="420.9" font-size="8.6" fill="#efeee2" font-weight="normal" text-anchor="start" textLength="72.5" lengthAdjust="spacingAndGlyphs">innovative and collaborative</text>
<polygon points="293.00,344.50 293.85,346.54 296.04,346.71 294.37,348.14 294.88,350.29 293.00,349.14 291.12,350.29 291.63,348.14 289.96,346.71 292.15,346.54" fill="none" stroke="#f1f0e6" stroke-width="0.9" stroke-linejoin="round"/>
<text x="303.0" y="350.9" font-size="8.6" fill="#efeee2" font-weight="normal" text-anchor="start" textLength="68.8" lengthAdjust="spacingAndGlyphs">Able to engage with senior</text>
<text x="303.0" y="360.3" font-size="8.6" fill="#efeee2" font-weight="normal" text-anchor="start" textLength="33.5" lengthAdjust="spacingAndGlyphs">management</text>
<polygon points="293.00,365.90 293.85,367.94 296.04,368.11 294.37,369.54 294.88,371.69 293.00,370.54 291.12,371.69 291.63,369.54 289.96,368.11 292.15,367.94" fill="none" stroke="#f1f0e6" stroke-width="0.9" stroke-linejoin="round"/>
<text x="303.0" y="372.3" font-size="8.6" fill="#efeee2" font-weight="normal" text-anchor="start" textLength="46.6" lengthAdjust="spacingAndGlyphs">Story telling skills</text>
<polygon points="293.00,377.90 293.85,379.94 296.04,380.11 294.37,381.54 294.88,383.69 293.00,382.54 291.12,383.69 291.63,381.54 289.96,380.11 292.15,379.94" fill="none" stroke="#f1f0e6" stroke-width="0.9" stroke-linejoin="round"/>
<text x="303.0" y="384.3" font-size="8.6" fill="#efeee2" font-weight="normal" text-anchor="start" textLength="87.7" lengthAdjust="spacingAndGlyphs">Translate data-driven insights into</text>
<text x="303.0" y="393.6" font-size="8.6" fill="#efeee2" font-weight="normal" text-anchor="start" textLength="56.2" lengthAdjust="spacingAndGlyphs">decisions and actions</text>
<polygon points="293.00,399.30 293.85,401.34 296.04,401.51 294.37,402.94 294.88,405.09 293.00,403.94 291.12,405.09 291.63,402.94 289.96,401.51 292.15,401.34" fill="none" stroke="#f1f0e6" stroke-width="0.9" stroke-linejoin="round"/>
<text x="303.0" y="405.7" font-size="8.6" fill="#efeee2" font-weight="normal" text-anchor="start" textLength="42.9" lengthAdjust="spacingAndGlyphs">Visual art design</text>
<polygon points="293.00,411.50 293.85,413.54 296.04,413.71 294.37,415.14 294.88,417.29 293.00,416.14 291.12,417.29 291.63,415.14 289.96,413.71 292.15,413.54" fill="none" stroke="#f1f0e6" stroke-width="0.9" stroke-linejoin="round"/>
<text x="303.0" y="417.9" font-size="8.6" fill="#efeee2" font-weight="normal" text-anchor="start" textLength="83.4" lengthAdjust="spacingAndGlyphs">R packages like ggplot or lattice</text>
<polygon points="293.00,423.80 293.85,425.84 296.04,426.01 294.37,427.44 294.88,429.59 293.00,428.44 291.12,429.59 291.63,427.44 289.96,426.01 292.15,425.84" fill="none" stroke="#f1f0e6" stroke-width="0.9" stroke-linejoin="round"/>
<text x="303.0" y="430.2" font-size="8.6" fill="#efeee2" font-weight="normal" text-anchor="start" textLength="86.9" lengthAdjust="spacingAndGlyphs">Knowledge of any of visualization</text>
<text x="303.0" y="439.8" font-size="8.6" fill="#efeee2" font-weight="normal" text-anchor="start" textLength="77.6" lengthAdjust="spacingAndGlyphs">tools e.g. Flare, D3.js, Tableau</text>
<text x="84.3" y="476.2" font-size="6.2" fill="#222" textLength="246" lengthAdjust="spacingAndGlyphs"><tspan font-weight="bold" text-decoration="underline">MarketingDistillery.com</tspan> is a group of practitioners in the area of e-commerce marketing. Our fields of expertise include</text>
<text x="84.3" y="483.2" font-size="6.2" fill="#222" font-weight="normal" text-anchor="start" textLength="243.0" lengthAdjust="spacingAndGlyphs">marketing strategy and optimization: customer tracking and on-site analytics: predictive analytics and econometrics: data</text>
<text x="84.3" y="490.2" font-size="6.2" fill="#222" font-weight="normal" text-anchor="start" textLength="215.0" lengthAdjust="spacingAndGlyphs">warehousing and big data systems: marketing channel insights in Paid Search, SEO, Social, CRM and brand.</text>
<text x="345" y="481.5" font-size="12" font-style="italic" font-family="Liberation Serif, serif" fill="#222" textLength="45" lengthAdjust="spacingAndGlyphs">Marketing</text>
<rect x="356.5" y="482" width="44.5" height="7.5" fill="#1a1a1a"/>
<text x="358" y="488.29999999999995" font-size="6.5" font-family="Liberation Serif, serif" font-weight="bold" fill="#fff" textLength="41.5" lengthAdjust="spacingAndGlyphs">DISTILLERY</text>
<text x="442.3" y="122.8" font-size="34.3" fill="#111" font-weight="normal" text-anchor="start" textLength="219.6" lengthAdjust="spacingAndGlyphs" stroke="#fff" stroke-width="0.7">Data Scientist</text>
<rect x="444" y="151" width="458.5" height="1" fill="#e58a55"/>
<circle cx="445.6" cy="187.4" r="2.2" fill="#111"/>
<text x="459.4" y="192.6" font-size="16.6" fill="#0c0c0c" font-weight="bold" text-anchor="start" textLength="139.5" lengthAdjust="spacingAndGlyphs">Statistical thinking</text>
<circle cx="445.6" cy="216.5" r="2.2" fill="#111"/>
<text x="459.4" y="221.7" font-size="16.6" fill="#0c0c0c" font-weight="bold" text-anchor="start" textLength="134.2" lengthAdjust="spacingAndGlyphs">Technical acumen</text>
<circle cx="445.6" cy="245.6" r="2.2" fill="#111"/>
<text x="459.4" y="250.8" font-size="16.6" fill="#0c0c0c" font-weight="bold" text-anchor="start" textLength="259.0" lengthAdjust="spacingAndGlyphs">Multi-modal communication skills</text>
<circle cx="445.6" cy="274.7" r="2.2" fill="#111"/>
<text x="459.4" y="279.9" font-size="16.6" fill="#0c0c0c" font-weight="bold" text-anchor="start" textLength="66.6" lengthAdjust="spacingAndGlyphs">Curiosity</text>
<circle cx="445.6" cy="303.8" r="2.2" fill="#111"/>
<text x="459.4" y="309.0" font-size="16.6" fill="#0c0c0c" font-weight="bold" text-anchor="start" textLength="72.6" lengthAdjust="spacingAndGlyphs">Creativity</text>
<circle cx="445.6" cy="332.9" r="2.2" fill="#111"/>
<text x="459.4" y="338.1" font-size="16.6" fill="#0c0c0c" font-weight="bold" text-anchor="start" textLength="148.1" lengthAdjust="spacingAndGlyphs">Domain Knowledge</text>
</svg>
<div class="abs" style="left:18px;top:607.5px;font-size:12.3px;line-height:14px;color:#fff;letter-spacing:-0.5px;-webkit-text-stroke:0.35px #fff">Asif R</div>
</div>
<div id="pborder"></div>
<div id="panel">
<div class="abs" style="left:19px;top:24px;font-size:16px;font-weight:bold;color:#fff;letter-spacing:-0.18px">Participants</div>
<svg class="abs" style="left:275px;top:25px" width="14" height="14" viewBox="0 0 14 14" stroke="#e6e6e6" stroke-width="1.2" fill="none"><path d="M1 1L13 13M13 1L1 13"/></svg>
<div class="abs" style="left:0;top:60px;width:319px;height:1px;background:#0f0f0f"></div>
<div class="abs" style="left:19px;top:77px;width:280px;height:32px;background:#333333;border-radius:3px"><div class="abs" style="left:12px;top:8px;font-size:13.4px;color:#cfcfcf">Type a name</div><svg class="abs" style="left:254px;top:8px" width="16" height="16" viewBox="0 0 16 16" fill="none" stroke="#fff" stroke-width="1.5" stroke-linecap="round"><circle cx="6.5" cy="6.500" r="4.5"/><path d="M10 10L14.500 14.5"/></svg></div>
<div class="abs" style="left:19px;top:119px;width:279px;height:32px;border:1px solid #5c5c5c;border-radius:3px;background:#232323"><svg class="abs" style="left:90px;top:7px" width="17" height="17" viewBox="0 0 17 17" fill="none" stroke="#fff" stroke-width="1.1" stroke-linejoin="round" stroke-linecap="round"><path d="M7 3.500H4A1.5 1.500 0 0 0 2.500 5V13A1.500 1.500 0 0 0 4 14.5H12A1.500 1.500 0 0 0 13.5 13V11.500"/><path d="M10.5 2L15 6L10.500 10V7.700C8 7.600 6.500 8.500 5.500 10.500C5.600 7 7.500 4.600 10.5 4.300Z"/></svg><div class="abs" style="left:114px;top:7px;font-size:13.5px;font-weight:bold;color:#fff;letter-spacing:-0.18px">Share invite</div></div>
<svg class="abs" style="left:5px;top:172.5px" width="9" height="7" viewBox="0 0 9 7"><path d="M0.500 0.500H8.5L4.500 6Z" fill="#c8c8c8"/></svg>
<div class="abs" style="left:19px;top:169px;font-size:12px;color:#fff;font-weight:bold;letter-spacing:-0.35px">In this meeting (10)</div>
<div class="abs" style="left:225px;top:163px;width:72px;height:24px;border:1px solid #5c5c5c;border-radius:3px;font-size:12px;font-weight:bold;color:#fff;text-align:center;line-height:24px;background:#232323">Mute all</div>
<div class="row" style="top:196px"><div class="pa" style="background:#fad4d0;color:#8e2f2a">SC</div><div class="nm" style="top:9px">Shivkumar Chandey</div><div class="nm" style="top:26px;font-size:12px;color:#c0c0c0;letter-spacing:0">Organizer</div><svg viewBox="0 0 20 20" fill="none" stroke="#fff" stroke-width="0.95" stroke-linecap="round"><rect x="7.5" y="2.500" width="5" height="9.5" rx="2.500"/><path d="M5 9.5a5 5 0 0 0 10 0M10 14.5V16.400"/><path d="M3.500 2.800L16.5 16.800" stroke="#1f1f1f" stroke-width="2.600"/><path d="M3.500 2.800L16.5 16.800"/></svg></div>
<div class="row" style="top:244px"><div class="pa" style="background:#f6cfe0;color:#7a1d48">AR</div><div class="nm">Aaron Rodrigues</div><svg viewBox="0 0 20 20" fill="none" stroke="#fff" stroke-width="0.95" stroke-linecap="round"><rect x="7.5" y="2.500" width="5" height="9.5" rx="2.500"/><path d="M5 9.5a5 5 0 0 0 10 0M10 14.5V16.400"/><path d="M3.500 2.800L16.5 16.800" stroke="#1f1f1f" stroke-width="2.600"/><path d="M3.500 2.800L16.5 16.800"/></svg></div>
<div class="row" style="top:292px"><div class="pa" style="background:#f9e7b8;color:#7a5a0a">A</div><div class="nm">abhi (Guest)</div><svg viewBox="0 0 20 20" fill="none" stroke="#fff" stroke-width="0.95" stroke-linecap="round"><rect x="7.5" y="2.500" width="5" height="9.5" rx="2.500"/><path d="M5 9.5a5 5 0 0 0 10 0M10 14.5V16.400"/><path d="M3.500 2.800L16.5 16.800" stroke="#1f1f1f" stroke-width="2.600"/><path d="M3.500 2.800L16.5 16.800"/></svg></div>
<div class="row" style="top:340px"><div class="pa" style="background:#d9eff3;color:#2d7077">A</div><div class="nm">Amrut (Guest)</div><svg viewBox="0 0 20 20" fill="none" stroke="#fff" stroke-width="0.95" stroke-linecap="round"><rect x="7.5" y="2.500" width="5" height="9.5" rx="2.500"/><path d="M5 9.5a5 5 0 0 0 10 0M10 14.5V16.400"/><path d="M3.500 2.800L16.5 16.800" stroke="#1f1f1f" stroke-width="2.600"/><path d="M3.500 2.800L16.5 16.800"/></svg></div>
<div class="row" style="top:388px"><div class="pa" style="background:#d3e2ea;color:#1f4e5c">AR</div><div class="nm">Asif R</div><svg viewBox="0 0 20 20" fill="none" stroke="#fff" stroke-width="0.95" stroke-linecap="round"><rect x="7.5" y="2.500" width="5" height="9.5" rx="2.500" fill="#fff"/><path d="M5 9.5a5 5 0 0 0 10 0M10 14.5V17.500"/></svg></div>
<div class="row" style="top:436px"><div class="pa" style="background:#fbe6b5;color:#7a5a0a">BW</div><div class="nm">Bhagyesh Worlikar (Guest)</div><svg viewBox="0 0 20 20" fill="none" stroke="#fff" stroke-width="0.95" stroke-linecap="round"><rect x="7.5" y="2.500" width="5" height="9.5" rx="2.500"/><path d="M5 9.5a5 5 0 0 0 10 0M10 14.5V16.400"/><path d="M3.500 2.800L16.5 16.800" stroke="#1f1f1f" stroke-width="2.600"/><path d="M3.500 2.800L16.5 16.800"/></svg></div>
<div class="row" style="top:484px"><div class="pa" style="background:#f3d3e4;color:#6b2150">H</div><div class="nm">hitesh (Guest)</div><svg viewBox="0 0 20 20" fill="none" stroke="#fff" stroke-width="0.95" stroke-linecap="round"><rect x="7.5" y="2.500" width="5" height="9.5" rx="2.500"/><path d="M5 9.5a5 5 0 0 0 10 0M10 14.5V16.400"/><path d="M3.500 2.800L16.5 16.800" stroke="#1f1f1f" stroke-width="2.600"/><path d="M3.500 2.800L16.5 16.800"/></svg></div>
<div class="row" style="top:532px"><div class="pa" style="background:#cfeadc;color:#1f6b47">KR</div><div class="nm">Kabir Rehlan</div><svg viewBox="0 0 20 20" fill="none" stroke="#fff" stroke-width="0.95" stroke-linecap="round"><rect x="7.5" y="2.500" width="5" height="9.5" rx="2.500"/><path d="M5 9.5a5 5 0 0 0 10 0M10 14.5V16.400"/><path d="M3.500 2.800L16.5 16.800" stroke="#1f1f1f" stroke-width="2.600"/><path d="M3.500 2.800L16.5 16.800"/></svg></div>
<div class="row" style="top:580px"><div class="pa" style="background:#f3d0d3;color:#7a1d2a">V</div><div class="nm">Vaishnavi (Guest)</div><svg viewBox="0 0 20 20" fill="none" stroke="#fff" stroke-width="0.95" stroke-linecap="round"><rect x="7.5" y="2.500" width="5" height="9.5" rx="2.500"/><path d="M5 9.5a5 5 0 0 0 10 0M10 14.5V16.400"/><path d="M3.500 2.800L16.5 16.800" stroke="#1f1f1f" stroke-width="2.600"/><path d="M3.500 2.800L16.5 16.800"/></svg></div>
<div class="row" style="top:628px"><div class="pa" style="background:#d3e2ea;color:#1f4e5c"></div><div class="nm"></div></div>
</div>
<div id="taskbar">
<svg class="abs" style="left:0;top:-0.4px" width="1366" height="32" viewBox="0 0 1366 32" font-family="Liberation Sans, sans-serif">
<!-- windows logo -->
<path d="M9 10.2L15.800 9.200V15.500H9Z M16.700 9.100L25.200 7.800V15.500H16.7Z M9 16.400H15.800V22.700L9 21.700Z M16.700 16.400H25.200V24.100L16.700 22.800Z" fill="#fff"/>
<!-- search -->
<circle cx="55.5" cy="13.600" r="5.100" fill="none" stroke="#fff" stroke-width="1.300"/><path d="M52 17.500L45.500 23.700" stroke="#fff" stroke-width="1.500" stroke-linecap="round"/>
<!-- explorer -->
<path d="M84 9.500H90L91.500 11H100V22.500H84Z" fill="#f5b92d"/><rect x="84" y="12.500" width="16" height="10" fill="#fbd45c"/><path d="M87.500 22.500V17.500H96.500V22.500H94.500V19.500H89.500V22.500Z" fill="#2f8ad8"/>
<!-- store -->
<path d="M124.500 12V10.500A1.500 1.500 0 0 1 126 9H131A1.500 1.500 0 0 1 132.500 10.500V12" fill="none" stroke="#39a0e6" stroke-width="1.100"/>
<path d="M121 11.500H136V22A1.800 1.800 0 0 1 134.200 23.800H122.800A1.800 1.800 0 0 1 121 22Z" fill="#f3f3f1"/>
<rect x="125" y="14" width="3" height="3" fill="#e8503a"/><rect x="129" y="14" width="3" height="3" fill="#7fba2b"/><rect x="125" y="18" width="3" height="3" fill="#2f9be6"/><rect x="129" y="18" width="3" height="3" fill="#f7b916"/>
<!-- chrome -->
<circle cx="166" cy="16" r="8" fill="#e33b2e"/>
<path d="M166 16L159.070 12A8 8 0 0 0 166 24L169.460 18Z" fill="#2ba24c"/>
<path d="M166 24A8 8 0 0 0 172.930 12H166L169.460 18Z" fill="#fbc116"/>
<circle cx="166" cy="16" r="3.700" fill="#fff"/><circle cx="166" cy="16" r="2.900" fill="#3f85f3"/>
<!-- zoom -->
<circle cx="203" cy="16" r="8.300" fill="#1b63e4"/><path d="M198.800 12.300H207L199 19.700H207.400" fill="none" stroke="#fff" stroke-width="2" stroke-linejoin="round" stroke-linecap="round"/>
<!-- firefox -->
<circle cx="240" cy="16.500" r="7.800" fill="#ff7a1a"/><path d="M240 8C243 6.500 245 8 245.500 10.500C248 13 248.500 17 247 20C245 24 240 25 236 23C240 24 245 21 244 16C243.500 12 240 11.500 240 8Z" fill="#ffbd2e"/><circle cx="240.300" cy="16.300" r="3.600" fill="#7a2fd0"/><path d="M232.500 14C233 11 235 9.500 236.500 9.500C236 11 237 12.500 239 12.500C236.500 13 236 15.500 237.500 17C234.500 17 233 15.500 232.500 14Z" fill="#ff4f2e"/>
<!-- teams -->
<circle cx="281" cy="10.500" r="3" fill="#7b83eb"/><circle cx="286" cy="12" r="2" fill="#5a62c8"/>
<path d="M276 14.500H286.500V20A4.500 4.500 0 0 1 282 24.500H280.500A4.500 4.500 0 0 1 276 20Z" fill="#7b83eb"/><path d="M283 14.500H289V19.500A3 3 0 0 1 283 20Z" fill="#5a62c8"/>
<rect x="269" y="10.500" width="11.500" height="11.500" rx="1.200" fill="#4b53bc"/>
<text x="274.750" y="19.300" font-size="8.500" font-weight="bold" fill="#fff" text-anchor="middle">T</text>
<!-- indicators -->
<rect x="78" y="29" width="28" height="2" fill="#8db6e2"/><rect x="97.500" y="29" width="1" height="2" fill="#3c5a78"/>
<rect x="152" y="29" width="28" height="2" fill="#8db6e2"/>
<rect x="263" y="29" width="28" height="2" fill="#8db6e2"/><rect x="282" y="29" width="1" height="2" fill="#3c5a78"/>
<!-- tray -->
<text x="999" y="20" font-size="13" fill="#cfd6db" textLength="42.600" lengthAdjust="spacingAndGlyphs">Desktop</text>
<path d="M1050.500 7.500L1053.500 10.500L1050.500 13.500M1055 7.500L1058 10.500L1055 13.500" fill="none" stroke="#e6e9ec" stroke-width="1.100"/>
<path d="M1069.500 19.500L1075 13.500L1080.500 19.500" fill="none" stroke="#fff" stroke-width="1.300"/>
<rect x="1095" y="8" width="6.500" height="11" rx="3.200" fill="#e9ecef"/><path d="M1093 16A5.200 5.200 0 0 0 1103.500 16M1098.250 21.500V24.500M1095.500 24.500H1101" fill="none" stroke="#e9ecef" stroke-width="1"/>
<rect x="1119" y="13" width="11" height="7" fill="none" stroke="#fff" stroke-width="1.100"/><rect x="1130.500" y="15" width="1.500" height="3" fill="#fff"/><rect x="1121" y="15" width="7" height="3" fill="#fff"/><path d="M1117 9V12M1120 9V12M1115.500 12H1121.500V14.500A3 3 0 0 1 1115.500 14.500Z" fill="none" stroke="#fff" stroke-width="1"/>
<rect x="1143.500" y="10" width="12" height="9" fill="none" stroke="#fff" stroke-width="1.100"/><path d="M1149.500 19V23M1145.500 23.500H1153.500" stroke="#fff" stroke-width="1.100"/><rect x="1139.500" y="9" width="5" height="6" fill="#1c2c42" stroke="#fff" stroke-width="1"/><path d="M1142 15V23.500H1146" fill="none" stroke="#fff" stroke-width="1"/>
<path d="M1163.500 14H1166L1169.500 10.500V22L1166 18.500H1163.500Z" fill="none" stroke="#fff" stroke-width="1.100" stroke-linejoin="round"/><path d="M1172 13.500A4 4 0 0 1 1172 19M1174.500 11.500A7 7 0 0 1 1174.500 21M1177 9.500A10 10 0 0 1 1177 23" fill="none" stroke="#fff" stroke-width="1"/>
<rect x="1187.500" y="10.500" width="22" height="11.500" rx="1" fill="none" stroke="#fff" stroke-width="1.100"/><path d="M1190 13.500H1207M1190 16.200H1207M1192.500 19.200H1204.500" stroke="#fff" stroke-width="1.100" stroke-dasharray="1.500 1"/>
<text x="1221.400" y="20" font-size="12.500" fill="#fff" textLength="22" lengthAdjust="spacingAndGlyphs">ENG</text>
<text x="1257.600" y="20" font-size="12.500" fill="#fff" textLength="48.500" lengthAdjust="spacingAndGlyphs">11:10 AM</text>
<path d="M1324 7.500H1340.300V20.300H1335.200L1332.200 23.600L1329.200 20.300H1324Z" fill="#fff"/><path d="M1327 10.800H1337.500M1327 13.800H1337.500M1327 16.900H1333.500" stroke="#1c2c42" stroke-width="1.100"/>
<rect x="1361" y="0" width="1" height="31" fill="#55657a"/>
</svg>
</div>
<div class="abs" style="left:1260px;top:376px;width:106px;height:24px;background:#000;border-radius:4px 0 0 4px"></div>
<div class="abs" style="left:1267px;top:382px;font-size:11.5px;color:#ececec;white-space:nowrap">Take a screenshot</div>
<div class="abs" style="left:1340px;top:395px;width:26px;height:120px;background:#1b1b1b;border:1px solid #4e4e4e;border-right:none;border-radius:5px 0 0 5px;box-shadow:0 0 3px rgba(0,0,0,.6)"></div>
<svg class="abs" style="left:1340px;top:395px" width="26" height="120" viewBox="0 0 26 120">
<ellipse cx="8" cy="8" rx="3.200" ry="2.600" fill="#d8d8d8" transform="rotate(-30 8 8)"/><path d="M5 11L11 5" stroke="#1b1b1b" stroke-width="0.800"/>
<circle cx="15.500" cy="8" r="0.800" fill="#eee"/><circle cx="18.500" cy="8" r="0.800" fill="#eee"/><circle cx="21.500" cy="8" r="0.800" fill="#eee"/>
<rect x="2" y="16" width="22" height="20" fill="#454545"/>
<path d="M3 22H8L9.500 19.500H14.500L16 22H21V32H3Z" fill="#fff"/><circle cx="12" cy="27" r="3" fill="none" stroke="#333" stroke-width="1.200"/><circle cx="18.500" cy="24" r="0.700" fill="#333"/>
<path d="M3 46.500H15.500V56.500H3Z M16 50.500L21 46.800V56.200L16 52.500Z" fill="#fff"/>
<rect x="4.300" y="69" width="13.500" height="11" fill="none" stroke="#fff" stroke-width="1.200"/><rect x="7.200" y="72.300" width="14.100" height="12.200" fill="#fff" stroke="#1b1b1b" stroke-width="1"/>
<g transform="translate(12.500 103)"><path d="M-1.700 -9H1.700L2.300 -6.600L4.300 -5.500L6.700 -6.300L8.400 -3.400L6.600 -1.700V1.700L8.400 3.400L6.700 6.300L4.300 5.500L2.300 6.600L1.700 9H-1.700L-2.300 6.600L-4.300 5.500L-6.700 6.300L-8.400 3.400L-6.600 1.700V-1.700L-8.400 -3.400L-6.700 -6.300L-4.300 -5.500L-2.300 -6.600Z" fill="#fff"/><circle r="3" fill="#1b1b1b"/></g>
</svg>

<div class="abs" style="left:1365px;top:0;width:1px;height:768px;background:#f6f6f6;z-index:5"></div>
<div class="abs" style="left:0;top:767px;width:1366px;height:1px;background:#f6f6f6;z-index:5"></div>
</div>
</body>
</html>
